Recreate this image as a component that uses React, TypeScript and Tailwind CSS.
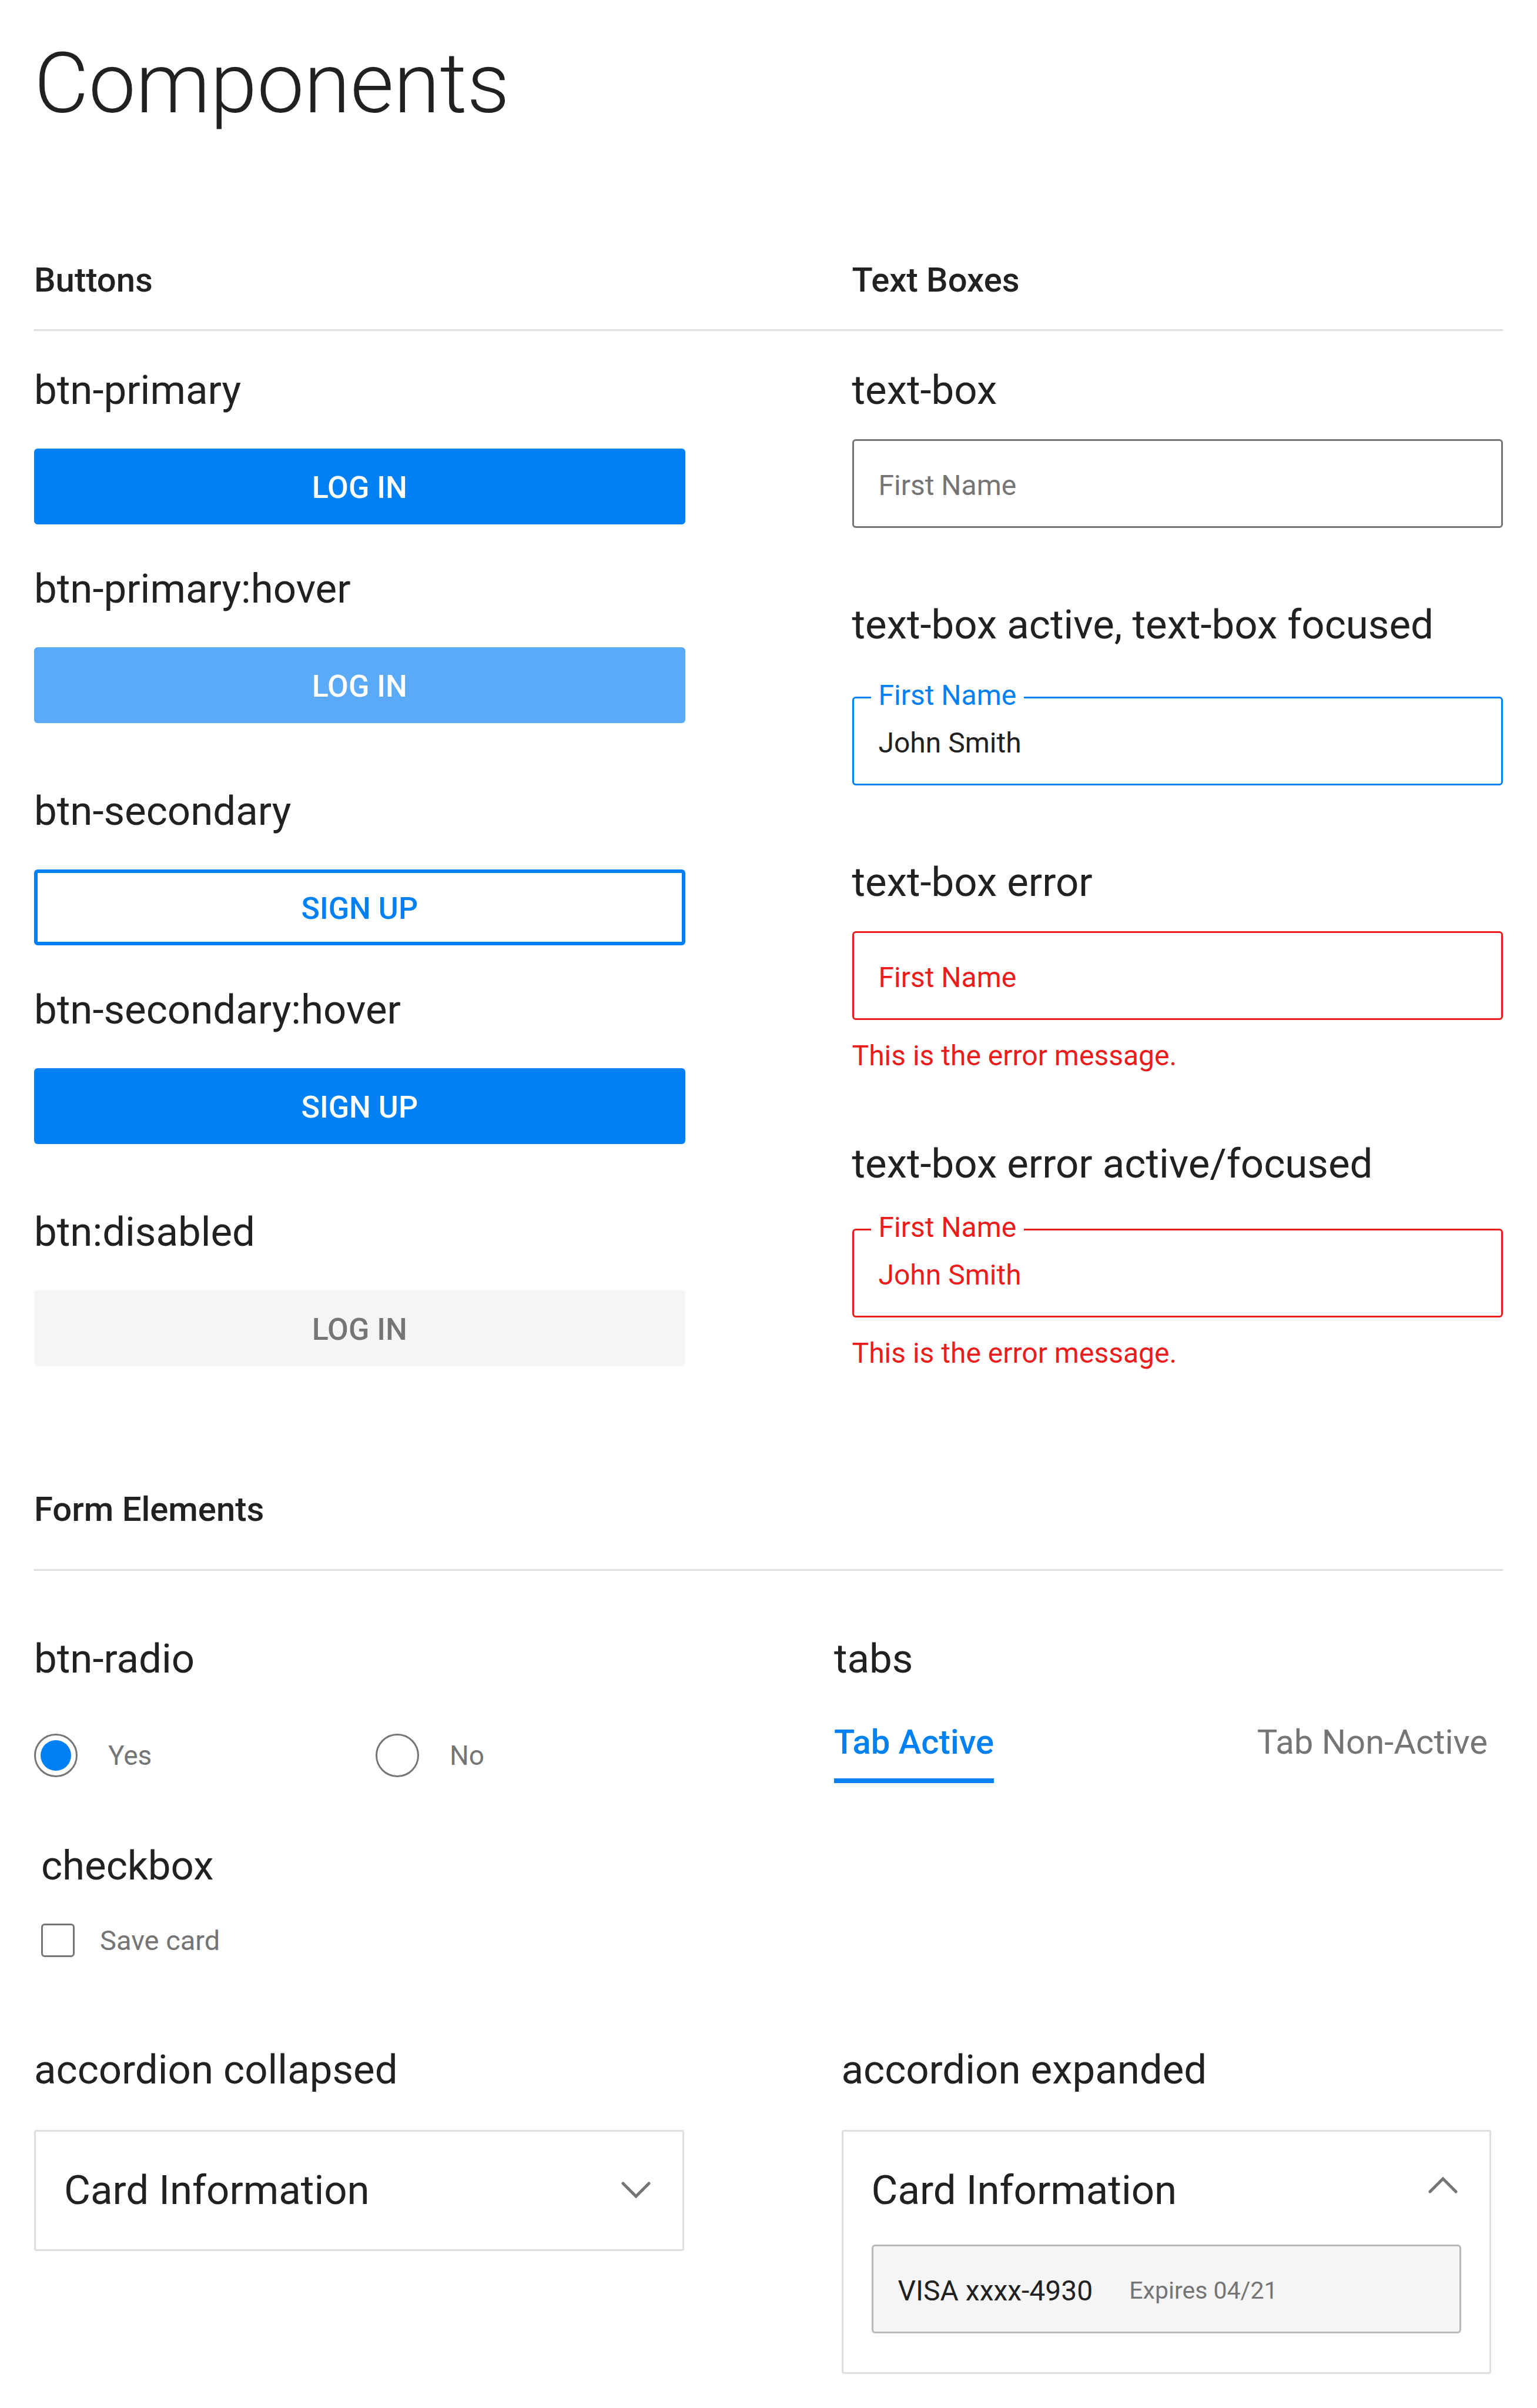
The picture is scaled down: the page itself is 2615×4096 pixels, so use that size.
import { useState, type ReactNode } from "react";

function Label({ children }: { children: ReactNode }) {
  return <h3 className="text-[69px] leading-[80px] font-normal">{children}</h3>;
}

function SectionTitle({ children }: { children: ReactNode }) {
  return <h2 className="text-[58px] leading-[68px] font-medium">{children}</h2>;
}

const buttonStyles = {
  primary: "bg-[#0080f5] text-white",
  primaryHover: "bg-[#5aaaf8] text-white",
  secondary: "border-6 border-[#0080f5] bg-white text-[#0080f5]",
  disabled: "bg-[#f5f5f5] text-[#757575]",
};

function ButtonSample({
  name,
  text,
  variant,
}: {
  name: string;
  text: string;
  variant: keyof typeof buttonStyles;
}) {
  return (
    <div className="flex flex-col gap-[59px]">
      <Label>{name}</Label>
      <button
        type="button"
        disabled={variant === "disabled"}
        className={`flex h-[129px] w-full items-center justify-center rounded-md pt-1 text-[52px] font-medium ${buttonStyles[variant]}`}
      >
        {text}
      </button>
    </div>
  );
}

const fieldStyles = {
  normal: "border-[#757575] text-[#212121] placeholder:text-[#757575]",
  active: "border-[#0080f5] text-[#212121]",
  error: "border-[#eb1c1c] text-[#eb1c1c] placeholder:text-[#eb1c1c]",
};

function TextField({
  id,
  tone,
  value,
  error,
}: {
  id: string;
  tone: keyof typeof fieldStyles;
  value?: string;
  error?: string;
}) {
  return (
    <div className="flex flex-col gap-[34px]">
      <div className="relative">
        <input
          id={id}
          type="text"
          defaultValue={value}
          placeholder="First Name"
          aria-label={value ? undefined : "First Name"}
          aria-invalid={tone === "error"}
          className={`block h-[151px] w-full rounded-md border-3 bg-transparent px-[42px] pt-[6px] text-[48px] outline-none placeholder:opacity-100 ${fieldStyles[tone]}`}
        />
        {value && (
          <label
            htmlFor={id}
            className={`absolute -top-[29px] left-8 bg-white px-[13px] text-[48px] leading-[54px] ${
              tone === "error" ? "text-[#eb1c1c]" : "text-[#0080f5]"
            }`}
          >
            First Name
          </label>
        )}
      </div>
      {error && <p className="text-[48px] leading-[54px] text-[#eb1c1c]">{error}</p>}
    </div>
  );
}

function Radio({ label, defaultChecked }: { label: string; defaultChecked?: boolean }) {
  return (
    <label className="flex items-center gap-[52px] text-[46px] leading-[54px] text-[#757575]">
      <input
        type="radio"
        name="answer"
        defaultChecked={defaultChecked}
        className="grid size-[74px] appearance-none place-items-center rounded-full border-3 border-[#757575] before:size-[52px] before:rounded-full checked:before:bg-[#0080f5]"
      />
      {label}
    </label>
  );
}

function Chevron({ up }: { up?: boolean }) {
  return (
    <svg
      viewBox="0 0 50 50"
      className="mr-[6px] size-[50px]"
      fill="none"
      stroke="#757575"
      strokeWidth="5"
      strokeLinecap="round"
      strokeLinejoin="miter"
      aria-hidden="true"
    >
      <path d={up ? "M3 27 L25 5 L47 27" : "M3 13 L25 35 L47 13"} />
    </svg>
  );
}

function Accordion({ initiallyOpen = false }: { initiallyOpen?: boolean }) {
  const [open, setOpen] = useState(initiallyOpen);
  return (
    <div className="rounded-sm border-3 border-[#dedede] px-12 pt-[60px]">
      <button
        type="button"
        aria-expanded={open}
        onClick={() => setOpen(!open)}
        className="flex w-full items-center justify-between text-left text-[69px] leading-[80px]"
      >
        Card Information
        <Chevron up={open} />
      </button>
      {open ? (
        <div className="mt-[52px] mb-[66px] flex h-[151px] items-center gap-[62px] rounded-md border-3 border-[#b8b8b8] bg-[#f5f5f5] px-[42px] pt-[6px]">
          <span className="text-[48px]">VISA xxxx-4930</span>
          <span className="text-[41px] text-[#757575]">Expires 04/21</span>
        </div>
      ) : (
        <div className="h-[60px]" />
      )}
    </div>
  );
}

export default function App() {
  return (
    <main className="min-h-screen bg-white pt-[62px] pr-[58px] pb-12 pl-[58px] font-['Roboto',sans-serif] text-[#212121]">
      <h1 className="text-[143px] leading-[160px] font-light">Components</h1>

      <section className="mt-[220px]">
        <div className="grid grid-cols-2 gap-x-[284px] border-b-3 border-[#dedede] pb-[50px]">
          <SectionTitle>Buttons</SectionTitle>
          <SectionTitle>Text Boxes</SectionTitle>
        </div>
        <div className="mt-[61px] grid grid-cols-2 items-start gap-x-[284px]">
          <div className="flex flex-col gap-[110px]">
            <div className="flex flex-col gap-[70px]">
              <ButtonSample name="btn-primary" text="LOG IN" variant="primary" />
              <ButtonSample name="btn-primary:hover" text="LOG IN" variant="primaryHover" />
            </div>
            <div className="flex flex-col gap-[70px]">
              <ButtonSample name="btn-secondary" text="SIGN UP" variant="secondary" />
              <ButtonSample name="btn-secondary:hover" text="SIGN UP" variant="primary" />
            </div>
            <ButtonSample name="btn:disabled" text="LOG IN" variant="disabled" />
          </div>

          <div className="flex flex-col gap-[125px]">
            <div className="flex flex-col gap-[43px]">
              <Label>text-box</Label>
              <TextField id="field-default" tone="normal" />
            </div>
            <div className="flex flex-col gap-[82px]">
              <Label>text-box active, text-box focused</Label>
              <TextField id="field-active" tone="active" value="John Smith" />
            </div>
            <div className="flex flex-col gap-[117px]">
              <div className="flex flex-col gap-[43px]">
                <Label>text-box error</Label>
                <TextField id="field-error" tone="error" error="This is the error message." />
              </div>
              <div className="flex flex-col gap-[70px]">
                <Label>text-box error active/focused</Label>
                <TextField
                  id="field-error-active"
                  tone="error"
                  value="John Smith"
                  error="This is the error message."
                />
              </div>
            </div>
          </div>
        </div>
      </section>

      <section className="mt-[204px]">
        <div className="border-b-3 border-[#dedede] pb-[68px]">
          <SectionTitle>Form Elements</SectionTitle>
        </div>

        <div className="mt-[110px] grid grid-cols-2 items-start gap-x-[249px] pr-[26px]">
          <div>
            <Label>btn-radio</Label>
            <div className="mt-[87px] grid w-full grid-cols-[581px_1fr]">
              <Radio label="Yes" defaultChecked />
              <Radio label="No" />
            </div>
            <div className="mt-[111px] pl-3">
              <Label>checkbox</Label>
              <label className="mt-[58px] flex items-center gap-[43px] text-[47px] leading-[54px] text-[#757575]">
                <input
                  type="checkbox"
                  className="size-[57px] appearance-none rounded-md border-3 border-[#757575] checked:bg-[#0080f5]"
                />
                Save card
              </label>
            </div>
          </div>
          <div>
            <Label>tabs</Label>
            <div role="tablist" className="mt-[67px] flex items-start justify-between">
              <button
                type="button"
                role="tab"
                aria-selected="true"
                className="border-b-8 border-[#0080f5] pb-7 text-[58px] leading-[68px] font-medium text-[#0080f5]"
              >
                Tab Active
              </button>
              <button
                type="button"
                role="tab"
                aria-selected="false"
                className="text-[58px] leading-[68px] text-[#757575]"
              >
                Tab Non-Active
              </button>
            </div>
          </div>
        </div>

        <div className="mt-[152px] grid grid-cols-2 items-start gap-x-[268px] pr-5">
          <div className="flex flex-col gap-[62px]">
            <Label>accordion collapsed</Label>
            <Accordion />
          </div>
          <div className="flex flex-col gap-[62px]">
            <Label>accordion expanded</Label>
            <Accordion initiallyOpen />
          </div>
        </div>
      </section>
    </main>
  );
}
